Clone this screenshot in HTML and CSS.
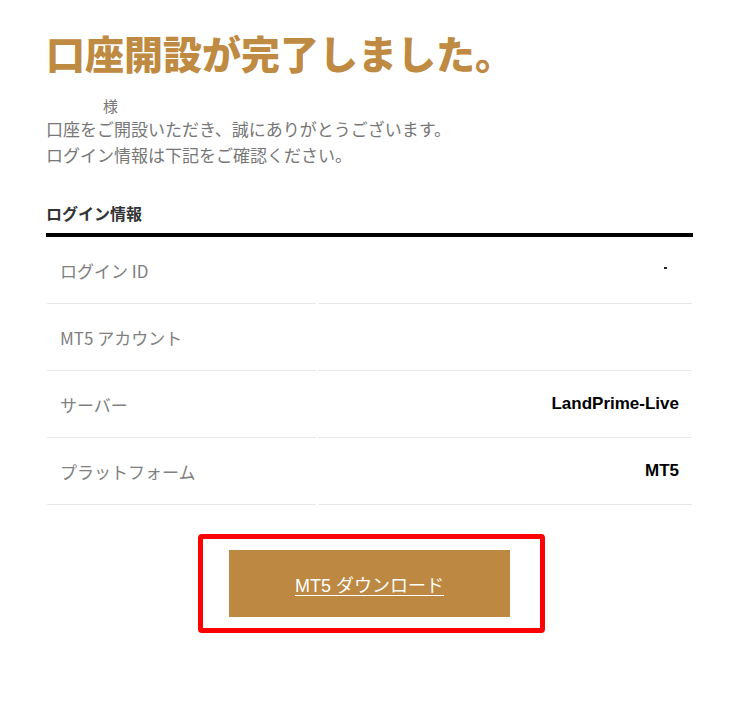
FILE: index.html
```html
<!DOCTYPE html>
<html lang="ja">
<head>
<meta charset="utf-8">
<link rel="stylesheet" href="styles.css">
</head>
<body>
<main class="page">
  <h1 class="title">口座開設が完了しました。</h1>
  <div class="greeting">
    <p class="name">様</p>
    <p>口座をご開設いただき、誠にありがとうございます。</p>
    <p>ログイン情報は下記をご確認ください。</p>
  </div>
  <h2 class="section">ログイン情報</h2>
  <table class="info">
    <tr><th>ログイン ID</th><td><span class="dot"></span></td></tr>
    <tr><th>MT5 アカウント</th><td></td></tr>
    <tr><th>サーバー</th><td>LandPrime-Live</td></tr>
    <tr><th>プラットフォーム</th><td>MT5</td></tr>
  </table>
  <div class="cta">
    <div class="highlight">
      <a class="btn" href="#">MT5 ダウンロード</a>
    </div>
  </div>
</main>
</body>
</html>
```
FILE: styles.css
```css
html, body {
  margin: 0;
  background: #fff;
}
body {
  font-family: "Liberation Sans", "Noto Sans CJK JP", sans-serif;
}
.page {
  width: 647px;
  margin-left: 46px;
  padding-top: 26px;
}
.title {
  margin: 0;
  font-family: "Noto Sans CJK JP", sans-serif;
  font-size: 39px;
  font-weight: 900;
  line-height: 52px;
  color: #bf8a42;
  letter-spacing: 0;
}
.greeting {
  margin-top: 12px;
  font-family: "Noto Sans CJK JP", sans-serif;
  font-size: 17px;
  line-height: 26px;
  color: #777;
}
.greeting p {
  margin: 0;
}
.greeting .name {
  padding-left: 57px;
  padding-top: 6px;
  font-size: 15px;
  line-height: 20px;
}
.section {
  margin: 33px 0 0;
  font-family: "Noto Sans CJK JP", sans-serif;
  font-size: 16px;
  font-weight: 700;
  line-height: 24px;
  color: #333;
  padding-bottom: 8px;
  border-bottom: 4px solid #000;
}
.info {
  border-collapse: separate;
  border-spacing: 2px 0;
  margin: 0 -1px;
  width: calc(100% + 2px);
}
.info th, .info td {
  height: 66px;
  padding: 0 13px;
  border-bottom: 1px solid #e8e8e8;
  vertical-align: middle;
}
.info th {
  width: 243px;
  text-align: left;
  font-family: "Noto Sans CJK JP", sans-serif;
  font-size: 17px;
  font-weight: 400;
  color: #808080;
}
.info td {
  text-align: right;
  font-size: 17px;
  font-weight: 700;
  color: #000;
}
.dot {
  display: inline-block;
  width: 3px;
  height: 2px;
  background: #223;
  margin-right: 12px;
  vertical-align: 6px;
}
.cta {
  display: flex;
  justify-content: center;
  margin-top: 29px;
}
.highlight {
  border: 5px solid #ff0000;
  border-radius: 4px;
  padding: 11px 30px 11px 26px;
  margin-left: 4px;
}
.btn {
  display: flex;
  align-items: center;
  justify-content: center;
  width: 281px;
  height: 67px;
  background: #bd8842;
  color: #fff;
  font-family: "Liberation Sans", "Noto Sans CJK JP", sans-serif;
  font-size: 18px;
  text-decoration: underline;
  text-underline-offset: 3px;
}
```
